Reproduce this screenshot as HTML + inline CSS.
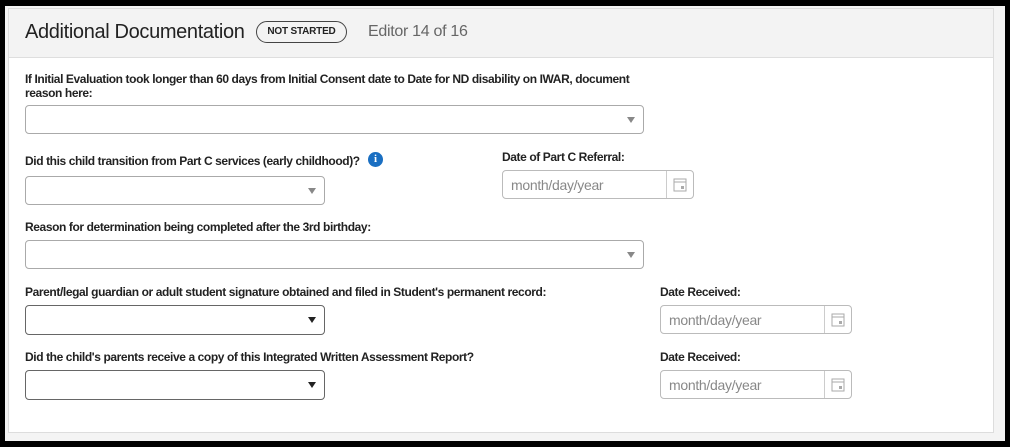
<!DOCTYPE html>
<html><head><style>
body{margin:0;width:1010px;height:446px;background:#d8d8d8;position:relative;overflow:hidden;font-family:"Liberation Sans",Arial,sans-serif;}
.frame{position:absolute;left:0;top:0;width:1000px;height:435px;border:6px solid #000;border-left-width:5px;background:#f4f4f4;box-sizing:content-box;}
.card{position:absolute;left:8px;top:8px;width:986px;height:425px;background:#fff;border:1px solid #ddd;box-sizing:border-box;}
.hdr{position:absolute;left:0;top:0;right:0;height:48px;background:#f3f3f3;border-bottom:1px solid #dedede;}
.title{position:absolute;left:16px;top:12px;font-size:20px;color:#222;letter-spacing:-0.35px;}
.badge{position:absolute;left:247px;top:12px;height:20px;width:89px;border:1px solid #444;border-radius:11px;font-size:10px;font-weight:bold;text-align:center;line-height:20px;color:#222;letter-spacing:-0.2px;}
.ed{position:absolute;left:359px;top:14px;font-size:16px;color:#666;letter-spacing:-0.3px;}
.lbl{position:absolute;font-size:12px;font-weight:bold;color:#222;line-height:14px;letter-spacing:-0.4px;}
.sel{position:absolute;border:1px solid #999;border-radius:4px;background:#fff;box-sizing:border-box;}
.sel.l{border-color:#aaa}
.arr{position:absolute;right:8px;top:50%;margin-top:-3px;width:0;height:0;border-left:4px solid transparent;border-right:4px solid transparent;border-top:6px solid #888;}
.arr.d{border-top-color:#222;}
.date{position:absolute;width:192px;height:29px;border:1px solid #bbb;border-radius:4px;box-sizing:border-box;}
.date span{position:absolute;left:8px;top:6px;font-size:14px;color:#888;letter-spacing:-0.3px;}
.date i{position:absolute;right:0;top:0;width:26px;height:27px;border-left:1px solid #ccc;}
.info{position:absolute;width:15px;height:15px;border-radius:50%;background:#1a6fc2;color:#fff;font-size:11px;font-weight:bold;text-align:center;line-height:15px;font-family:"Liberation Serif",serif;}
</style></head><body>
<div class="frame"></div>
<div class="card">
<div class="hdr"><div class="title">Additional Documentation</div><div class="badge">NOT STARTED</div><div class="ed">Editor 14 of 16</div></div>
</div>
<div class="lbl" style="left:25px;top:72px;width:620px">If Initial Evaluation took longer than 60 days from Initial Consent date to Date for ND disability on IWAR, document reason here:</div>
<div class="sel l" style="left:25px;top:105px;width:619px;height:29px"><div class="arr"></div></div>
<div class="lbl" style="left:25px;top:154px">Did this child transition from Part C services (early childhood)?</div>
<div class="info" style="left:368px;top:152px">i</div>
<div class="sel l" style="left:25px;top:176px;width:300px;height:29px"><div class="arr"></div></div>
<div class="lbl" style="left:502px;top:150px">Date of Part C Referral:</div>
<div class="date" style="left:502px;top:170px"><span>month/day/year</span><i><svg width="26" height="27"><rect x="7" y="8" width="12" height="12" fill="none" stroke="#aaa"/><line x1="7" y1="11" x2="19" y2="11" stroke="#aaa"/><rect x="14" y="15" width="3" height="3" fill="#aaa"/></svg></i></div>
<div class="lbl" style="left:25px;top:220px">Reason for determination being completed after the 3rd birthday:</div>
<div class="sel l" style="left:25px;top:240px;width:619px;height:29px"><div class="arr"></div></div>
<div class="lbl" style="left:25px;top:285px">Parent/legal guardian or adult student signature obtained and filed in Student's permanent record:</div>
<div class="sel" style="left:25px;top:305px;width:300px;height:30px;border-color:#666"><div class="arr d"></div></div>
<div class="lbl" style="left:660px;top:285px">Date Received:</div>
<div class="date" style="left:660px;top:305px"><span>month/day/year</span><i><svg width="26" height="27"><rect x="7" y="8" width="12" height="12" fill="none" stroke="#aaa"/><line x1="7" y1="11" x2="19" y2="11" stroke="#aaa"/><rect x="14" y="15" width="3" height="3" fill="#aaa"/></svg></i></div>
<div class="lbl" style="left:25px;top:350px">Did the child's parents receive a copy of this Integrated Written Assessment Report?</div>
<div class="sel" style="left:25px;top:370px;width:300px;height:30px;border-color:#666"><div class="arr d"></div></div>
<div class="lbl" style="left:660px;top:350px">Date Received:</div>
<div class="date" style="left:660px;top:370px"><span>month/day/year</span><i><svg width="26" height="27"><rect x="7" y="8" width="12" height="12" fill="none" stroke="#aaa"/><line x1="7" y1="11" x2="19" y2="11" stroke="#aaa"/><rect x="14" y="15" width="3" height="3" fill="#aaa"/></svg></i></div>
</body></html>
